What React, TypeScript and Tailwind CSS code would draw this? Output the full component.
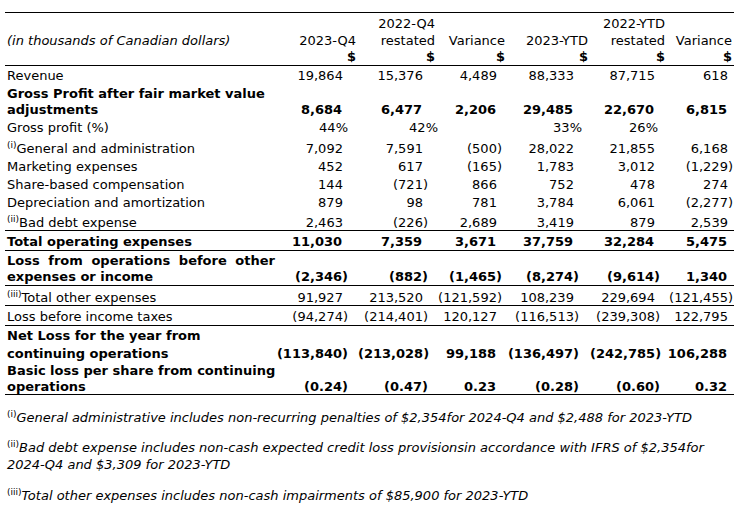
import React from "react";

const GRID = "grid grid-cols-[265px_88px_73px_76px_83px_77px_67px]";
const PAD = ["pr-[10px]", "pr-[3px]", "pr-[5px]", "pr-[11px]", "pr-[7px]", "pr-[1px]"];

function Sup({ t }: { t: string }) {
  return <span className="text-[9px] not-italic font-normal relative -top-[5px] leading-none">{t}</span>;
}

function Val({ v, i, bold }: { v: string; i: number; bold?: boolean }) {
  const neg = v.startsWith("(");
  return (
    <div className={`text-right whitespace-nowrap ${PAD[i]} ${bold ? "font-bold" : ""}`}>
      {v}
      {!neg && <span className="invisible">)</span>}
    </div>
  );
}

type Row = {
  label: React.ReactNode;
  vals: string[];
  bold?: boolean;
  cls: string;
};

const rows: Row[] = [
  { label: "Revenue", vals: ["19,864", "15,376", "4,489", "88,333", "87,715", "618"], cls: "h-[18px] leading-[16px] items-end" },
  {
    label: (
      <>
        Gross Profit after fair market value
        <br />
        adjustments
      </>
    ),
    vals: ["8,684", "6,477", "2,206", "29,485", "22,670", "6,815"],
    bold: true,
    cls: "h-[34px] leading-[16px] items-end",
  },
];

const r2: Row[] = [
  { label: <><Sup t="(i)" />General and administration</>, vals: ["7,092", "7,591", "(500)", "28,022", "21,855", "6,168"], cls: "h-[20px] leading-[14px] items-end" },
  { label: "Marketing expenses", vals: ["452", "617", "(165)", "1,783", "3,012", "(1,229)"], cls: "h-[18px] leading-[14px] items-end" },
  { label: "Share-based compensation", vals: ["144", "(721)", "866", "752", "478", "274"], cls: "h-[18px] leading-[14px] items-end" },
  { label: "Depreciation and amortization", vals: ["879", "98", "781", "3,784", "6,061", "(2,277)"], cls: "h-[18px] leading-[14px] items-end" },
  { label: <><Sup t="(ii)" />Bad debt expense</>, vals: ["2,463", "(226)", "2,689", "3,419", "879", "2,539"], cls: "h-[21px] leading-[14px] items-end border-b border-black" },
  { label: "Total operating expenses", vals: ["11,030", "7,359", "3,671", "37,759", "32,284", "5,475"], bold: true, cls: "h-[20px] leading-[16px] items-end border-b-[1.5px] border-black" },
  {
    label: (
      <>
        <span className="block w-[268px] text-justify [text-align-last:justify]">Loss from operations before other</span>
        expenses or income
      </>
    ),
    vals: ["(2,346)", "(882)", "(1,465)", "(8,274)", "(9,614)", "1,340"],
    bold: true,
    cls: "h-[35px] leading-[16px] items-end border-b border-black",
  },
  { label: <><Sup t="(iii)" />Total other expenses</>, vals: ["91,927", "213,520", "(121,592)", "108,239", "229,694", "(121,455)"], cls: "h-[20px] leading-[14px] items-end border-b border-black" },
  { label: "Loss before income taxes", vals: ["(94,274)", "(214,401)", "120,127", "(116,513)", "(239,308)", "122,795"], cls: "h-[20px] leading-[16px] items-end border-b border-black" },
  {
    label: (
      <>
        Net Loss for the year from
        <br />
        continuing operations
      </>
    ),
    vals: ["(113,840)", "(213,028)", "99,188", "(136,497)", "(242,785)", "106,288"],
    bold: true,
    cls: "h-[37px] leading-[18px] items-end",
  },
  {
    label: (
      <>
        Basic loss per share from continuing
        <br />
        operations
      </>
    ),
    vals: ["(0.24)", "(0.47)", "0.23", "(0.28)", "(0.60)", "0.32"],
    bold: true,
    cls: "h-[32px] leading-[16px] items-end border-b-[1.5px] border-black",
  },
];

function RowView({ r }: { r: Row }) {
  return (
    <div className={`${GRID} ${r.cls}`}>
      <div className={`pl-[2px] whitespace-nowrap ${r.bold ? "font-bold" : ""}`}>{r.label}</div>
      {r.vals.map((v, i) => (
        <Val key={i} v={v} i={i} bold={r.bold} />
      ))}
    </div>
  );
}

export default function App() {
  const heads: [string, string, string][] = [
    ["", "2023-Q4", ""],
    ["2022-Q4", "restated", "-mr-[6px]"],
    ["", "Variance", ""],
    ["", "2023-YTD", ""],
    ["2022-YTD", "restated", ""],
    ["", "Variance", ""],
  ];
  return (
    <div className="w-[750px] h-[513px] bg-white text-black text-[13px] font-['DejaVu_Sans',sans-serif] pt-[12px] pl-[5px] overflow-hidden">
      <div className="w-[729px]">
        {/* header */}
        <div className={`${GRID} h-[54px] border-t border-b border-black pt-[2px] leading-[17px]`}>
          <div className="pl-[2px] flex flex-col">
            <div className="h-[17px]" />
            <div className="italic">(in thousands of Canadian dollars)</div>
          </div>
          {heads.map(([a, b, m], i) => (
            <div key={i} className={`text-right pr-[2px] whitespace-nowrap ${m}`}>
              <div className="h-[17px]">{a}</div>
              <div>{b}</div>
              <div className="font-bold leading-[15px]">$</div>
            </div>
          ))}
        </div>
        {rows.map((r, k) => (
          <RowView key={k} r={r} />
        ))}
        {/* gross profit % */}
        <div className={`${GRID} h-[18px] leading-[16px] items-end`}>
          <div className="pl-[2px]">Gross profit (%)</div>
          <div className="text-right pr-[10px]">44%</div>
          <div className="text-right -mr-[7px]">42%</div>
          <div />
          <div className="text-right pr-[8px]">33%</div>
          <div className="text-right pr-[9px]">26%</div>
          <div />
        </div>
        {r2.map((r, k) => (
          <RowView key={k} r={r} />
        ))}
        {/* footnotes */}
        <div className="italic pl-[2px] whitespace-nowrap">
          <p className="mt-[14px] leading-[18px]">
            <Sup t="(i)" />General administrative includes non-recurring penalties of $2,354for 2024-Q4 and $2,488 for 2023-YTD
          </p>
          <p className="mt-[12px] leading-[17px]">
            <Sup t="(ii)" />Bad debt expense includes non-cash expected credit loss provisionsin accordance with IFRS of $2,354for
            <br />
            2024-Q4 and $3,309 for 2023-YTD
          </p>
          <p className="mt-[14px] leading-[18px]">
            <Sup t="(iii)" />Total other expenses includes non-cash impairments of $85,900 for 2023-YTD
          </p>
        </div>
      </div>
    </div>
  );
}
